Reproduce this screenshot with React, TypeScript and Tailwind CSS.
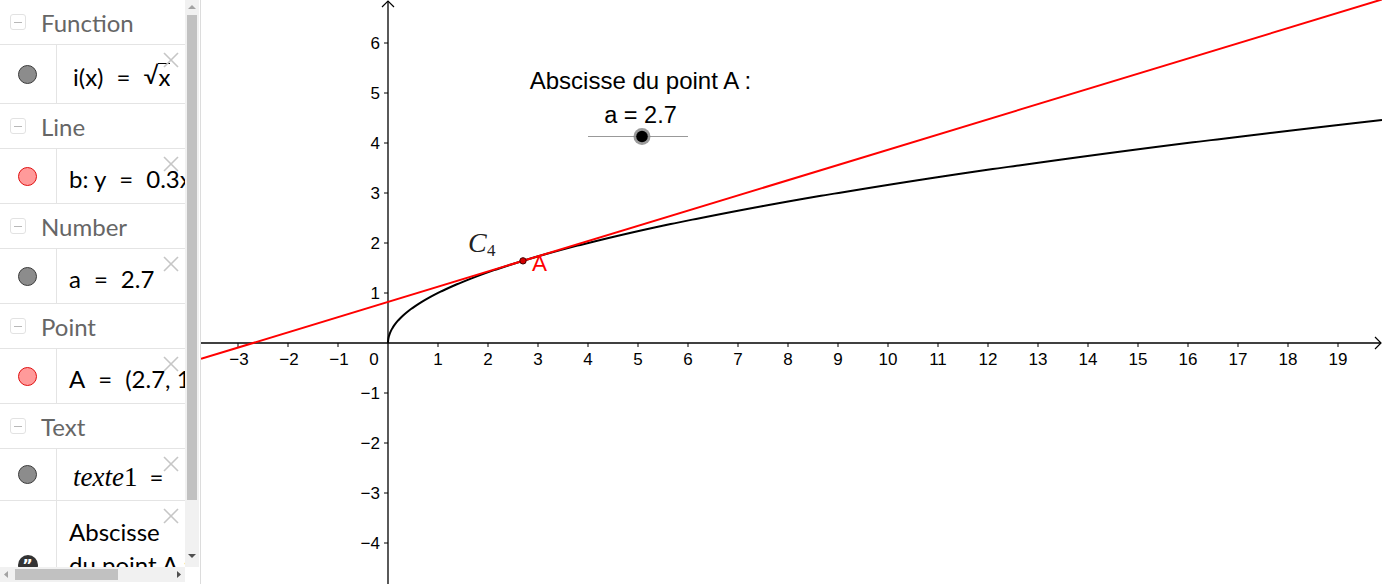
import React from "react";

const X0 = 388;
const Y0 = 343;
const U = 50;

function CloseX() {
  return (
    <svg className="absolute left-[163px] top-[7px]" width="16" height="16" viewBox="0 0 16 16">
      <line x1="1" y1="1" x2="15" y2="15" stroke="#c6c6c6" strokeWidth="1.6" />
      <line x1="15" y1="1" x2="1" y2="15" stroke="#c6c6c6" strokeWidth="1.6" />
    </svg>
  );
}

function Header({ label }: { label: string }) {
  return (
    <div className="h-[45px] flex items-center border-b border-[#e4e4e4] shrink-0">
      <div className="ml-[10px] w-[16px] h-[16px] rounded-[3px] border border-[#e2e2e2] flex items-center justify-center">
        <div className="w-[8px] h-[1px] bg-[#b8b8b8]" />
      </div>
      <span className="ml-[15px] pt-[1px] text-[24px] leading-none text-[#666666]" style={{ fontFamily: "Lato, 'Open Sans', sans-serif" }}>
        {label}
      </span>
    </div>
  );
}

function Dot({ red }: { red?: boolean }) {
  return red ? (
    <div className="w-[19px] h-[19px] rounded-full bg-[#ff9a9a] border border-[#e01010]" />
  ) : (
    <div className="w-[19px] h-[19px] rounded-full bg-[#8c8c8c] border border-[#3a3a3a]" />
  );
}

function Item({ h, red, children, pl = "pl-[12px]" }: { h: string; red?: boolean; children: React.ReactNode; pl?: string }) {
  return (
    <div className={`relative flex border-b border-[#e4e4e4] shrink-0 ${h}`}>
      <div className="w-[57px] shrink-0 border-r border-[#e4e4e4] flex items-center justify-center pr-[1px]">
        <Dot red={red} />
      </div>
      <div
        className={`flex items-center pt-[5px] whitespace-nowrap overflow-hidden text-[24px] text-black ${pl}`}
        style={{ fontFamily: "Lato, 'Open Sans', sans-serif" }}
      >
        {children}
      </div>
      <CloseX />
    </div>
  );
}

function Eq() {
  return <span className="mx-[13px]">=</span>;
}

function Graph() {
  const xTicks: number[] = [];
  for (let i = -3; i <= 19; i++) if (i !== 0) xTicks.push(i);
  const yTicks: number[] = [];
  for (let j = -4; j <= 6; j++) if (j !== 0) yTicks.push(j);

  const pts: string[] = [];
  const xmax = (1382 - X0) / U;
  for (let k = 0; k <= 300; k++) {
    const x = xmax * Math.pow(k / 300, 2);
    pts.push(`${(X0 + U * x).toFixed(2)},${(Y0 - U * Math.sqrt(x)).toFixed(2)}`);
  }
  const m = 1 / (2 * Math.sqrt(2.7));
  const b = Math.sqrt(2.7) / 2;
  const lx1 = (201 - X0) / U;
  const lx2 = (1382 - X0) / U;
  const ax = X0 + U * 2.7;
  const ay = Y0 - U * Math.sqrt(2.7);
  const lab = "'Liberation Sans', Arial, sans-serif";

  return (
    <svg width="1181" height="584" viewBox="201 0 1181 584" className="block">
      <rect x="201" y="0" width="1181" height="584" fill="#ffffff" />
      <line x1="201" y1={Y0} x2="1381" y2={Y0} stroke="#000" strokeWidth="1.3" />
      <line x1={X0} y1="1" x2={X0} y2="584" stroke="#000" strokeWidth="1.3" />
      <polyline points={`1375,337 1381,343 1375,349`} fill="none" stroke="#000" strokeWidth="1.2" />
      <polyline points={`382,7 388,1 394,7`} fill="none" stroke="#000" strokeWidth="1.2" />
      {xTicks.map((i) => (
        <g key={"x" + i}>
          <line x1={X0 + U * i} y1={Y0} x2={X0 + U * i} y2={Y0 + 4} stroke="#000" strokeWidth="1" />
          <text x={X0 + U * i + (i < 0 ? 1 : 0)} y={365} fontSize="17" textAnchor="middle" fontFamily={lab} fill="#000">
            {i < 0 ? `\u2212${-i}` : `${i}`}
          </text>
        </g>
      ))}
      <text x={374} y={365} fontSize="17" textAnchor="middle" fontFamily={lab} fill="#000">0</text>
      {yTicks.map((j) => (
        <g key={"y" + j}>
          <line x1={X0 - 4} y1={Y0 - U * j} x2={X0} y2={Y0 - U * j} stroke="#000" strokeWidth="1" />
          <text x={380} y={Y0 - U * j + 6} fontSize="17" textAnchor="end" fontFamily={lab} fill="#000">
            {j < 0 ? `\u2212${-j}` : `${j}`}
          </text>
        </g>
      ))}
      <polyline points={pts.join(" ")} fill="none" stroke="#000" strokeWidth="2" strokeLinejoin="round" />
      <line x1="201" y1={Y0 - U * (m * lx1 + b)} x2="1382" y2={Y0 - U * (m * lx2 + b)} stroke="#ff0000" strokeWidth="2" />
      <circle cx={ax} cy={ay} r="3.2" fill="#d40000" stroke="#400000" strokeWidth="1" />
      <text x={532} y={271} fontSize="22.5" fontFamily={lab} fill="#ff0000">A</text>
      <text x={468} y={252} fontSize="28" fontStyle="italic" fontFamily="'Liberation Serif', 'DejaVu Serif', serif" fill="#222">C</text>
      <text x={487} y={256} fontSize="17" fontFamily="'Liberation Serif', 'DejaVu Serif', serif" fill="#222">4</text>
      <text x={640.5} y={89} fontSize="24" textAnchor="middle" fontFamily={lab} fill="#000">Abscisse du point A :</text>
      <text x={640.5} y={123} fontSize="23.5" textAnchor="middle" fontFamily={lab} fill="#000">a = 2.7</text>
      <line x1="588" y1="136.5" x2="688" y2="136.5" stroke="#999" strokeWidth="1" />
      <circle cx="642" cy="136.5" r="8.5" fill="#8a8a8a" fillOpacity="0.85" />
      <circle cx="642" cy="136.5" r="5.8" fill="#000" />
    </svg>
  );
}

export default function App() {
  return (
    <div className="w-[1382px] h-[584px] flex overflow-hidden bg-white">
      <div className="w-[201px] h-[584px] shrink-0 flex flex-col border-r border-[#dcdcdc]">
        <div className="flex h-[567px]">
          <div className="w-[185px] h-[567px] overflow-hidden flex flex-col">
            <Header label="Function" />
            <Item h="h-[59px]" pl="pl-[16px]">
              <span>i(x)</span>
              <Eq />
              <span className="flex items-start">
                <span className="text-[24px] leading-none">√</span>
                <span className="border-t border-black leading-[26px]">x</span>
              </span>
            </Item>
            <Header label="Line" />
            <Item h="h-[55px]" red>
              <span>b: y</span>
              <Eq />
              <span>0.3x + 0.82</span>
            </Item>
            <Header label="Number" />
            <Item h="h-[55px]">
              <span>a</span>
              <Eq />
              <span>2.7</span>
            </Item>
            <Header label="Point" />
            <Item h="h-[55px]" red>
              <span>A</span>
              <Eq />
              <span>(2.7, 1.64)</span>
            </Item>
            <Header label="Text" />
            <Item h="h-[52px]" pl="pl-[16px]">
              <span className="text-[27px]" style={{ fontFamily: "'Liberation Serif', 'DejaVu Serif', serif" }}>
                <i>texte</i>1
              </span>
              <span className="ml-[12px]">=</span>
              <span className="ml-[24px]">"Abscisse</span>
            </Item>
            <div className="relative flex shrink-0 h-[120px]">
              <div className="w-[57px] shrink-0 border-r border-[#e4e4e4] flex justify-center pt-[54px] pr-[1px]">
                <div className="w-[20px] h-[20px] rounded-full bg-[#333] flex items-start justify-center text-white text-[16px] leading-[22px] font-bold" style={{ fontFamily: "'DejaVu Sans', sans-serif" }}>
                  ”
                </div>
              </div>
              <div className="pl-[12px] pt-[14px] text-[24px] leading-[33px] text-black" style={{ fontFamily: "Lato, 'Open Sans', sans-serif" }}>
                <div>Abscisse</div>
                <div className="whitespace-nowrap">du point A :</div>
              </div>
              <CloseX />
            </div>
          </div>
          <div className="w-[14px] h-[567px] bg-[#f1f1f1] flex flex-col items-center">
            <svg width="14" height="15" viewBox="0 0 14 15">
              <polygon points="3,9 11,9 7,5" fill="#a3a3a3" />
            </svg>
            <div className="w-[10px] h-[485px] bg-[#c1c1c1]" />
            <div className="flex-1" />
            <svg width="14" height="15" viewBox="0 0 14 15" className="mb-[2px]">
              <polygon points="3,4 11,4 7,8" fill="#505050" />
            </svg>
          </div>
          <div className="w-[1px]" />
        </div>
        <div className="flex h-[17px]">
          <div className="w-[185px] h-[15px] bg-[#f1f1f1] flex items-center">
            <svg width="15" height="15" viewBox="0 0 15 15">
              <polygon points="8,4 8,11 4,7.5" fill="#a3a3a3" />
            </svg>
            <div className="w-[103px] h-[11px] bg-[#c1c1c1]" />
            <div className="flex-1" />
            <svg width="15" height="15" viewBox="0 0 15 15">
              <polygon points="7,4 7,11 11,7.5" fill="#505050" />
            </svg>
          </div>
        </div>
      </div>
      <div className="flex-1 h-[584px]">
        <Graph />
      </div>
    </div>
  );
}
